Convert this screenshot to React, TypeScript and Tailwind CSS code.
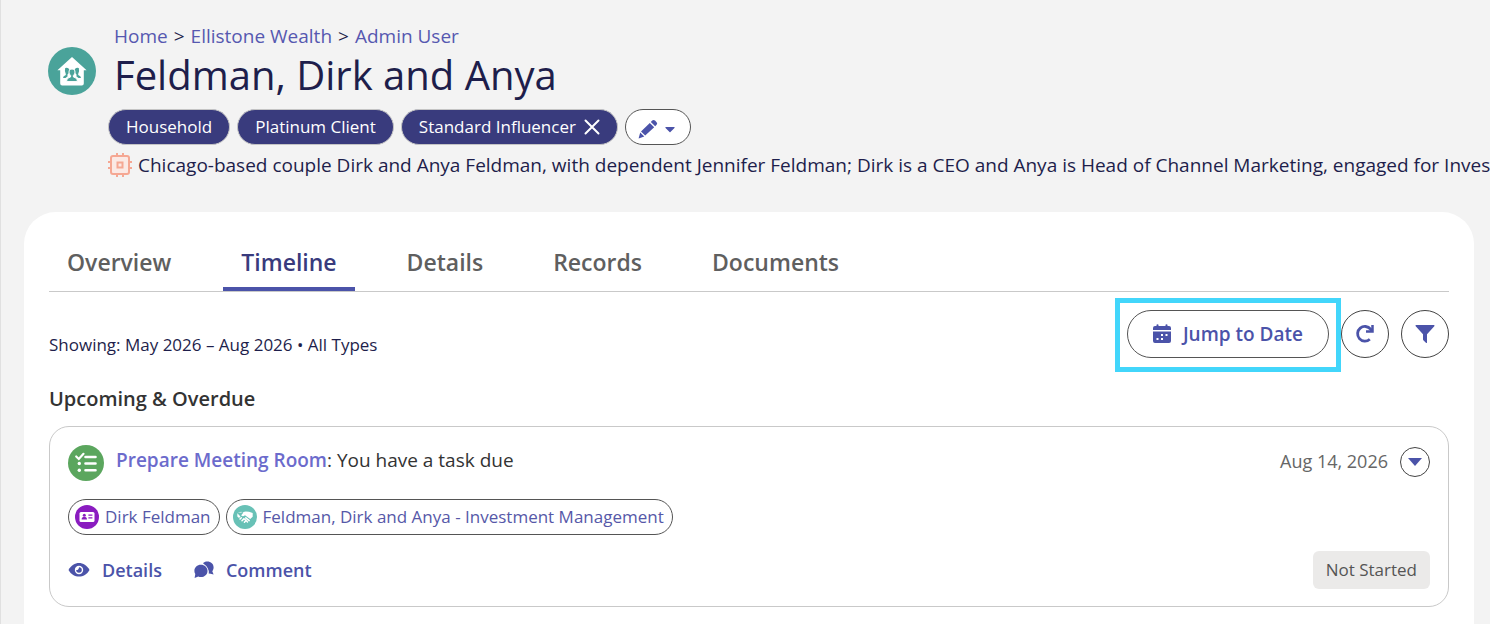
import type { ReactNode } from 'react';
import { FaCaretDown } from 'react-icons/fa';

const crumbs = ['Home', 'Ellistone Wealth', 'Admin User'];

const tabs = [
  { id: 'overview', label: 'Overview' },
  { id: 'timeline', label: 'Timeline' },
  { id: 'details', label: 'Details' },
  { id: 'records', label: 'Records' },
  { id: 'documents', label: 'Documents' },
];

const activeTab = 'timeline';

function HouseholdIcon() {
  return (
    <svg viewBox="0 0 48 48" className="size-12 shrink-0" aria-hidden="true">
      <circle cx="24" cy="24" r="24" fill="#4aa39a" />
      <path d="M24 10 38.6 23.2H35.8V36.4Q35.8 38.4 33.8 38.4H14.2Q12.2 38.4 12.2 36.4V23.2H9.4Z" fill="#fff" />
      <g fill="#4aa39a">
        <path d="M17.2 21Q20.5 20 21.2 22.5L20.8 26 19.5 27.5V29.5L17.5 31H15Q15 28.8 17.8 28V27Q16.3 24 17.2 21Z" />
        <path d="M30.8 21Q27.5 20 26.8 22.5L27.2 26 28.5 27.5V29.5L30.5 31H33Q33 28.8 30.2 28V27Q31.7 24 30.8 21Z" />
      </g>
      <path
        d="M18.6 34.6c0-2.8 1.6-4 4-4.6v-1.6c-1-1-1.6-2-1.6-3.4 0-2 1.2-3 3-3s3 1 3 3c0 1.4-.6 2.4-1.6 3.4V30c2.4.6 4 1.8 4 4.6Z"
        fill="#4aa39a"
        stroke="#fff"
      />
    </svg>
  );
}

function ChipIcon() {
  return (
    <svg viewBox="0 0 24 24" className="size-6 shrink-0" fill="none" stroke="#f5a793" strokeWidth="2" aria-hidden="true">
      <rect x="3" y="3" width="18" height="18" rx="2" fill="#fbe9e5" />
      <rect x="9.5" y="9.5" width="5" height="5" />
      <path d="M9 0v3M15 0v3M9 21v3M15 21v3M0 9h3M0 15h3M21 9h3M21 15h3" />
    </svg>
  );
}

function PencilIcon() {
  return (
    <svg viewBox="0 0 20 20" className="size-5" fill="#4b53a9" aria-hidden="true">
      <path d="M14.2 1.6Q15.6.4 17 1.6L18.6 3.2Q19.8 4.6 18.6 5.8L17.2 7.2 12.8 3ZM11.8 4 16.2 8.3 7.2 16.6 3 12.4ZM2.2 13.5 6.3 17.6.6 19.6Z" />
    </svg>
  );
}

function CalendarIcon() {
  return (
    <svg viewBox="0 0 18 20" className="h-5 w-[18px]" fill="#4b53a9" aria-hidden="true">
      <path d="M3.5 1Q3.5.2 4.5.2T5.5 1V2H12.5V1Q12.5.2 13.5.2T14.5 1V2H16Q18 2 18 4V6H0V4Q0 2 2 2H3.5Z" />
      <path fillRule="evenodd" d="M0 7.4H18V17Q18 19 16 19H2Q0 19 0 17ZM8 10h2v2H8ZM12.5 10h2v2h-2ZM3.5 14h2v2h-2ZM8 14h2v2H8Z" />
    </svg>
  );
}

function RefreshIcon() {
  return (
    <svg viewBox="0 0 20 20" className="size-5" fill="none" stroke="#4b53a9" strokeWidth="2.8" aria-hidden="true">
      <path d="M14.8 15.2A7.3 7.3 0 1 1 15.6 5.2L17 7" />
      <path d="M17.5 1V7.5H11" strokeWidth="2.5" />
    </svg>
  );
}

function FunnelIcon() {
  return (
    <svg viewBox="0 0 20 20" className="size-5" fill="#4b53a9" aria-hidden="true">
      <path d="M1 1H19Q20 1.2 19.3 2.2L12 10.3V18.4Q11.8 19.4 10.9 18.7L8.6 16.5Q8 16 8 15.2V10.3L.7 2.2Q0 1.2 1 1Z" />
    </svg>
  );
}

function TaskIcon() {
  return (
    <svg viewBox="0 0 36 36" className="size-9 shrink-0" aria-hidden="true">
      <circle cx="18" cy="18" r="18" fill="#5ba65e" />
      <g stroke="#fff" strokeWidth="2.6" strokeLinecap="round" fill="none">
        <path d="M17.5 12H27.5M17.5 18.5H27.5M17.5 25.3H27.5" />
        <path d="M8.2 11.5 10.8 14 15.5 8.8" strokeWidth="2.2" />
      </g>
      <circle cx="11.3" cy="18.5" r="1.7" fill="#fff" />
      <circle cx="11.3" cy="25.3" r="1.7" fill="#fff" />
    </svg>
  );
}

function ContactIcon() {
  return (
    <svg viewBox="0 0 24 24" className="size-6 shrink-0" aria-hidden="true">
      <circle cx="12" cy="12" r="12" fill="#8a1cc0" />
      <rect x="4.5" y="7" width="15" height="10" rx="1.5" fill="#fff" />
      <g fill="#8a1cc0">
        <circle cx="9.3" cy="10.3" r="1.5" />
        <path d="M6.6 14.5c0-1.8 1-2.4 2.7-2.4s2.7.6 2.7 2.4ZM13.4 9.5h4v1.3h-4ZM13.4 12.3h4v1.3h-4Z" />
      </g>
    </svg>
  );
}

function HandshakeIcon() {
  return (
    <svg viewBox="0 0 24 24" className="size-6 shrink-0" aria-hidden="true">
      <circle cx="12" cy="12" r="12" fill="#68c1b6" />
      <path d="M4.3 8.3 8 6.8 10.5 7.5 8.2 10.2Q9.5 12.2 12 10.3L17.2 14 19.7 11.8V8L16 6.8 12.8 6.5Z" fill="#fff" />
      <path d="M4.3 8.3V11.5L6 13 7.5 11.5Z" fill="#fff" />
      <path d="M7 14 8.3 12.7M9 15.8 10.7 13.9M11.4 17.3 13 15.5M12.8 12.8 16.2 15.6M11.5 14 14.5 17" stroke="#fff" strokeWidth="1.5" strokeLinecap="round" fill="none" />
    </svg>
  );
}

function EyeIcon() {
  return (
    <svg viewBox="0 0 22 16" className="h-4 w-[22px]" aria-hidden="true">
      <path d="M.5 8C5.5-1.3 16.5-1.3 21.5 8 16.5 16.8 5.500 16.8.5 8Z" fill="#4b53a9" />
      <circle cx="11" cy="8" r="4.2" fill="#fff" />
      <path d="M11 5.2A2.8 2.8 0 1 1 8.2 8Q10.800 8.200 11 5.200Z" fill="#4b53a9" />
    </svg>
  );
}

function CommentIcon() {
  return (
    <svg viewBox="0 0 20 18" className="h-[18px] w-5" fill="#4b53a9" aria-hidden="true">
      <path d="M9 2.2C10 1.2 11.5.6 13.2.6 17 .6 19.6 3.2 19.6 6.5 19.6 8 19 9.2 18.3 10.2L19.6 13.6 15.5 12.6Q15 12.8 14.8 12.8 15.8 7 9 2.2Z" />
      <path d="M.6 17 1.3 13C.6 12 .4 11 .4 9.9.4 6.5 3.2 3.8 6.9 3.8S13.5 6.5 13.5 9.9 10.6 16 6.9 16Q5.5 16 4.3 15.5Z" />
    </svg>
  );
}

function Tag({ children }: { children: ReactNode }) {
  return (
    <li className="flex h-9 items-center gap-2 rounded-full border border-[#c4c4c4] bg-[#393b7d] px-[17px] text-[17px] text-white">
      {children}
    </li>
  );
}

function RecordChip({ icon, label }: { icon: ReactNode; label: string }) {
  return (
    <a href="#" className="flex h-9 items-center gap-1.5 rounded-full border border-[#555] pr-2 pl-1.5 text-[17px] text-[#5658a8]">
      {icon}
      {label}
    </a>
  );
}

function Header() {
  return (
    <header className="flex gap-3 pt-6 pl-[47px]">
      <div className="pt-[23px]">
        <HouseholdIcon />
      </div>
      <div className="min-w-0 flex-1">
        <nav aria-label="Breadcrumb" className="pl-1.5">
          <ol className="flex gap-1.5 text-[19px] leading-6">
            {crumbs.map((crumb, i) => (
              <li key={crumb} className="flex gap-1.5">
                {i > 0 && <span>&gt;</span>}
                <a href="#" className="text-[#5658b0]">{crumb}</a>
              </li>
            ))}
          </ol>
        </nav>
        <h1 className="pl-1.5 text-[40px] leading-[54px]">Feldman, Dirk and Anya</h1>
        <div className="mt-[7px] flex items-center gap-[7px]">
          <ul className="flex gap-[7px]">
            <Tag>Household</Tag>
            <Tag>Platinum Client</Tag>
            <Tag>
              Standard Influencer
              <button type="button" aria-label="Remove Standard Influencer">
                <svg viewBox="0 0 16 16" className="size-4" stroke="#fff" strokeWidth="2" strokeLinecap="round" aria-hidden="true">
                  <path d="M1.5 1.5 14.5 14.5M14.5 1.5 1.5 14.5" />
                </svg>
              </button>
            </Tag>
          </ul>
          <button type="button" aria-label="Edit tags" className="flex h-9 items-center gap-1 rounded-full border border-[#555] bg-white px-3 pt-1">
            <PencilIcon />
            <FaCaretDown className="size-4 text-[#4b53a9]" />
          </button>
        </div>
        <p className="mt-2 flex items-center gap-1.5 overflow-hidden text-[19px] leading-6 whitespace-nowrap">
          <ChipIcon />
          Chicago-based couple Dirk and Anya Feldman, with dependent Jennifer Feldman; Dirk is a CEO and Anya is Head of Channel Marketing, engaged for Investment Management
        </p>
      </div>
    </header>
  );
}

function TimelineItem() {
  return (
    <article className="rounded-[20px] border border-[#c9c9c9] px-[18px] pt-[18px] pb-[17px]">
      <div className="flex items-start gap-3">
        <TaskIcon />
        <h3 className="flex-1 text-[19px] leading-[30px] text-[#333]">
          <a href="#" className="font-semibold text-[#6c6bcc]">Prepare Meeting Room</a>: You have a task due
        </h3>
        <time dateTime="2026-08-14" className="text-lg leading-8 text-[#666]">Aug 14, 2026</time>
        <button type="button" aria-label="More actions" className="mt-0.5 flex size-[30px] items-center justify-center rounded-full border border-[#444]">
          <svg viewBox="0 0 14 8" className="h-2 w-3.5" fill="#4b53a9" aria-hidden="true">
            <path d="M0 0H14L7 8Z" />
          </svg>
        </button>
      </div>
      <div className="mt-[18px] flex gap-1.5">
        <RecordChip icon={<ContactIcon />} label="Dirk Feldman" />
        <RecordChip icon={<HandshakeIcon />} label="Feldman, Dirk and Anya - Investment Management" />
      </div>
      <div className="mt-4 flex items-center gap-8 text-lg font-semibold text-[#4b53a9]">
        <button type="button" className="flex items-center gap-3">
          <EyeIcon />
          Details
        </button>
        <button type="button" className="flex items-center gap-3">
          <CommentIcon />
          Comment
        </button>
        <span className="ml-auto rounded-md bg-[#ebeae9] px-[13px] py-1.5 text-[17px] leading-[26px] font-normal text-[#555]">Not Started</span>
      </div>
    </article>
  );
}

export default function App() {
  return (
    <div className="flex min-h-screen flex-col border-l border-[#e0e0e0] bg-[#f3f3f3] font-['Open_Sans','Noto_Sans',sans-serif] text-[#1e1e4b]">
      <Header />
      <main className="mt-[35px] mr-4 ml-[23px] flex-1 rounded-t-[32px] bg-white px-[25px] pt-7 pb-4">
        <div role="tablist" className="flex gap-[34px] border-b border-[#c9c9c9]">
          {tabs.map((tab) => (
            <button
              key={tab.id}
              type="button"
              role="tab"
              aria-selected={tab.id === activeTab}
              className={`border-b-4 px-[18px] pt-1.5 pb-[9px] text-[23px] leading-8 font-semibold ${
                tab.id === activeTab ? 'border-[#4b53a9] text-[#393b7d]' : 'border-transparent text-[#5f5f5f]'
              }`}
            >
              {tab.label}
            </button>
          ))}
        </div>

        <div className="mt-[18px] flex items-center justify-between">
          <p className="pt-[22px] text-[17px]">Showing: May 2026 – Aug 2026 • All Types</p>
          <div className="flex gap-3">
            <div className="relative">
              <button type="button" className="flex h-12 items-center gap-3 rounded-full border border-[#555] px-[25px] text-[19px] font-semibold text-[#4b53a9]">
                <CalendarIcon />
                Jump to Date
              </button>
              {/* callout frame around the button */}
              <div className="pointer-events-none absolute -inset-x-3 -top-3 -bottom-3.5 border-[5px] border-[#42d6fb]" />
            </div>
            <button type="button" aria-label="Refresh" className="flex size-12 items-center justify-center rounded-full border border-[#444]">
              <RefreshIcon />
            </button>
            <button type="button" aria-label="Filter" className="flex size-12 items-center justify-center rounded-full border border-[#444]">
              <FunnelIcon />
            </button>
          </div>
        </div>

        <h2 className="mt-[27px] mb-[13px] text-xl font-semibold text-[#333]">Upcoming &amp; Overdue</h2>
        <TimelineItem />
      </main>
    </div>
  );
}
